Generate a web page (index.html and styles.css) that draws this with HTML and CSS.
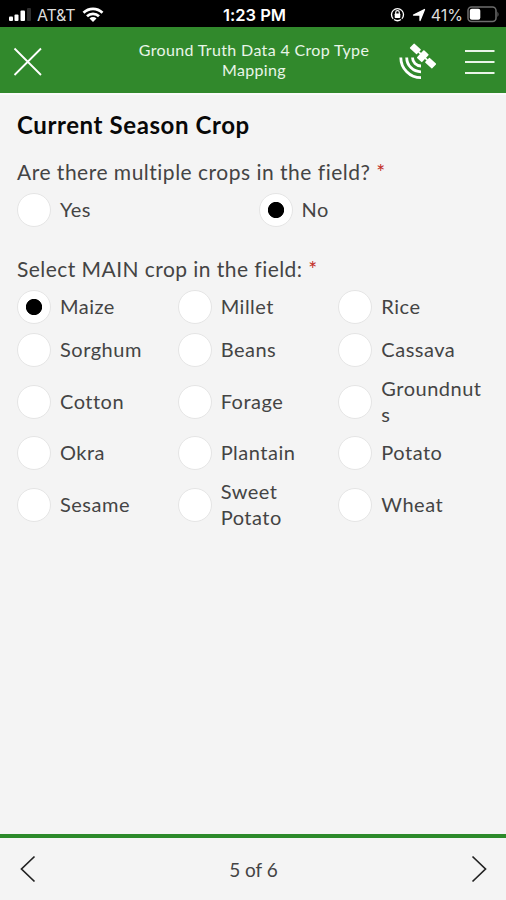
FILE: index.html
```html
<!DOCTYPE html>
<html lang="en">
<head>
<meta charset="utf-8">
<title>Ground Truth Data 4 Crop Type Mapping</title>
<link rel="stylesheet" href="styles.css">
</head>
<body>
<div class="status">
  <div class="status-left">
    <svg width="24" height="14" viewBox="0 0 24 14" fill="#fff"><rect x="0" y="8.5" width="4" height="4.5" rx="1"/><rect x="5.5" y="6.5" width="4" height="6.500" rx="1"/><rect x="11.500" y="2.500" width="4.500" height="10.500" rx="1"/><rect x="18" y="0" width="4" height="13" rx="1" fill="#2d2d2d"/></svg>
    <span class="carrier">AT&amp;T</span>
    <svg class="wifi" width="22" height="16" viewBox="0 0 22 16" fill="none" stroke="#fff" stroke-width="2.700"><path d="M1.500 5.700a13.500 13.500 0 0 1 19 0M5 9.300a8.500 8.500 0 0 1 12 0"/><path d="M11 15l-3.500-3.500a5 5 0 0 1 7 0z" fill="#fff" stroke="none"/></svg>
  </div>
  <div class="clock">1:23 PM</div>
  <div class="status-right">
    <svg width="15" height="15" viewBox="0 0 15 15"><path d="M3.200 11.800A6 6 0 1 1 11.800 11.800M4 12.500a6 6 0 0 0 7 0" fill="none" stroke="#fff" stroke-width="1.300"/><rect x="4.700" y="6.500" width="5.600" height="4.500" rx=".7" fill="#fff"/><path d="M5.700 7V5.500a1.800 1.800 0 0 1 3.600 0V7" fill="none" stroke="#fff" stroke-width="1.200"/></svg>
    <svg class="locate" width="14" height="14" viewBox="0 0 14 14"><path d="M12.500 1.500L8 12.500V7H1.500z" fill="#fff" stroke="#fff" stroke-width="1.300" stroke-linejoin="round"/></svg>
    <span class="percent">41%</span>
    <svg class="battery" width="33" height="17" viewBox="0 0 33 17"><rect x="1" y="1" width="28" height="14.500" rx="3.500" fill="none" stroke="#6d6d6d" stroke-width="1.500"/><rect x="2.800" y="2.800" width="10.500" height="11" rx="2" fill="#fff"/><path d="M30.500 5.500q2 2.800 0 5.500z" fill="#777"/></svg>
  </div>
</div>
<header class="header">
  <svg class="close" width="30" height="30" viewBox="0 0 30 30" stroke="#fff" stroke-width="1.800"><path d="M1.500 1.500l26.500 26.500M28 1.500L1.500 28"/></svg>
  <h1 class="app-title">Ground Truth Data 4 Crop Type<br>Mapping</h1>
  <div class="header-right">
    <svg width="38" height="38" viewBox="0 0 38 38"><g fill="none" stroke="#fff" stroke-width="2.800"><path d="M2.800 14.500A20.200 20.200 0 0 0 23 34.700"/><path d="M8.700 14.500A14.300 14.300 0 0 0 23 28.800"/><path d="M14.500 14.500A8.500 8.500 0 0 0 23 23"/></g><g fill="#fff" transform="translate(25 13) rotate(43)"><rect x="-15.200" y="-3.300" width="9.500" height="6.600" rx=".6"/><rect x="5.700" y="-3.300" width="9.500" height="6.600" rx=".6"/><rect x="-3.500" y="-5" width="7" height="10.500" rx=".8"/><rect x="-6" y="-.9" width="12" height="1.800"/></g></svg>
    <svg width="30" height="26" viewBox="0 0 30 26" stroke="#e9f5e8" stroke-width="2"><path d="M0 2h29.500M0 13h29.500M0 24h29.500"/></svg>
  </div>
</header>
<main class="form">
  <h2 class="section-title">Current Season Crop</h2>
  <section class="question">
    <p class="prompt">Are there multiple crops in the field? <b class="required">*</b></p>
    <div class="options two">
      <label class="option"><i class="radio"></i><span>Yes</span></label>
      <label class="option"><i class="radio on"></i><span>No</span></label>
    </div>
  </section>
  <section class="question">
    <p class="prompt main-crop">Select MAIN crop in the field: <b class="required">*</b></p>
    <div class="options three">
      <label class="option"><i class="radio on"></i><span>Maize</span></label>
      <label class="option"><i class="radio"></i><span>Millet</span></label>
      <label class="option"><i class="radio"></i><span>Rice</span></label>
      <label class="option"><i class="radio"></i><span>Sorghum</span></label>
      <label class="option"><i class="radio"></i><span>Beans</span></label>
      <label class="option"><i class="radio"></i><span>Cassava</span></label>
      <label class="option"><i class="radio"></i><span>Cotton</span></label>
      <label class="option"><i class="radio"></i><span>Forage</span></label>
      <label class="option"><i class="radio"></i><span>Groundnut<br>s</span></label>
      <label class="option"><i class="radio"></i><span>Okra</span></label>
      <label class="option"><i class="radio"></i><span>Plantain</span></label>
      <label class="option"><i class="radio"></i><span>Potato</span></label>
      <label class="option"><i class="radio"></i><span>Sesame</span></label>
      <label class="option"><i class="radio"></i><span>Sweet<br>Potato</span></label>
      <label class="option"><i class="radio"></i><span>Wheat</span></label>
    </div>
  </section>
</main>
<footer class="footer">
  <svg width="16" height="28" viewBox="0 0 16 28" fill="none" stroke="#222" stroke-width="1.700"><path d="M14.500 1.500L1.500 14l13 12.500"/></svg>
  <span class="page">5 of 6</span>
  <svg width="16" height="28" viewBox="0 0 16 28" fill="none" stroke="#222" stroke-width="1.700"><path d="M1.500 1.500l13 12.500-13 12.500"/></svg>
</footer>
</body>
</html>
```
FILE: styles.css
```css
* { box-sizing: border-box; }
body {
  margin: 0;
  height: 900px;
  display: flex;
  flex-direction: column;
  overflow: hidden;
  background: #f4f4f4;
  color: #444;
  font-family: Lato, sans-serif;
  font-size: 20px;
  font-variant-ligatures: none;
}
svg { display: block; flex: none; }
h1, h2, p { margin: 0; }
.status {
  height: 27px;
  flex: none;
  display: grid;
  grid-template-columns: 1fr auto 1fr;
  align-items: center;
  padding: 2px 6px 0 9px;
  background: #000;
  color: #fff;
  font-family: Inter, sans-serif;
}
.status-left, .status-right { display: flex; align-items: center; }
.status-right { justify-content: flex-end; }
.carrier { margin-left: 4px; font-size: 16px; letter-spacing: -0.2px; color: #ddd; }
.wifi { margin-left: 7px; }
.clock { font-size: 16.5px; font-weight: 600; }
.locate { margin-left: 7px; }
.percent { margin-left: 5px; font-size: 16px; color: #ddd; }
.battery { margin-left: 4px; }
.header {
  height: 66px;
  flex: none;
  display: grid;
  grid-template-columns: 104px 1fr 104px;
  align-items: center;
  padding: 0 11px 0 13px;
  background: #31892c;
  color: #e9f5e8;
}
.close { margin-top: 4px; }
.header-right { display: flex; justify-content: flex-end; align-items: center; gap: 29px; padding-top: 3px; }
.app-title {
  font-size: 16px;
  line-height: 20px;
  font-weight: 400;
  letter-spacing: 0.35px;
  text-align: center;
  white-space: nowrap;
}
.form {
  flex: 1;
  border-top: 2px solid #fbfbfb;
  padding: 14px 16px 0 17px;
}
.section-title { font-size: 24px; line-height: 32px; font-weight: 700; letter-spacing: 0.6px; color: #080808; }
.question { margin-top: 17px; }
.question + .question { margin-top: 28px; }
.prompt { height: 35px; line-height: 27px; font-size: 21px; letter-spacing: 0.5px; white-space: nowrap; }
.main-crop { letter-spacing: 0.45px; }
.required { color: #c22c25; font-weight: 400; }
.options { display: grid; gap: 9px; }
.two { grid-template-columns: repeat(2, 1fr); column-gap: 10px; }
.three { grid-template-columns: repeat(3, 1fr); }
.option { display: flex; align-items: center; gap: 9px; line-height: 25.5px; min-height: 34px; letter-spacing: 0.5px; }
.radio {
  flex: none;
  width: 34px;
  height: 34px;
  border: 1px solid #e5e5e5;
  border-radius: 50%;
  background: #fff;
}
.on { background: radial-gradient(circle, #000 7.7px, #fff 8.5px); }
.footer {
  height: 66px;
  flex: none;
  display: flex;
  justify-content: space-between;
  align-items: center;
  padding: 0 19px 0 20px;
  border-top: 4px solid #2c8a2a;
}
.page { font-size: 19px; }
```
